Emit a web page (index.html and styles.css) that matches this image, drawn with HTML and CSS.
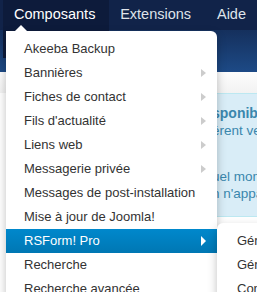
FILE: index.html
```html
<!DOCTYPE html>
<html lang="fr">
<head>
    <meta charset="UTF-8">
    <title>Composants</title>
    <link rel="stylesheet" href="styles.css">
</head>
<body>
    <div class="navbar">
        <ul class="nav">
            <li class="nav-item open">
                <a href="javascript:;">Composants <b class="caret"></b></a>
                <ul class="dropdown-menu">
                    <li><a href="javascript:;">Akeeba Backup</a></li>
                    <li class="has-sub"><a href="javascript:;">Bannières</a></li>
                    <li class="has-sub"><a href="javascript:;">Fiches de contact</a></li>
                    <li class="has-sub"><a href="javascript:;">Fils d'actualité</a></li>
                    <li class="has-sub"><a href="javascript:;">Liens web</a></li>
                    <li class="has-sub"><a href="javascript:;">Messagerie privée</a></li>
                    <li><a href="javascript:;">Messages de post-installation</a></li>
                    <li><a href="javascript:;">Mise à jour de Joomla!</a></li>
                    <li class="has-sub active">
                        <a href="javascript:;">RSForm! Pro</a>
                        <ul class="sub-menu">
                            <li><a href="javascript:;">Gérer les formulaires</a></li>
                            <li><a href="javascript:;">Gérer les soumissions</a></li>
                            <li><a href="javascript:;">Configuration</a></li>
                        </ul>
                    </li>
                    <li><a href="javascript:;">Recherche</a></li>
                    <li><a href="javascript:;">Recherche avancée</a></li>
                </ul>
            </li>
            <li class="nav-item"><a href="javascript:;">Extensions <b class="caret"></b></a></li>
            <li class="nav-item"><a href="javascript:;">Aide</a></li>
        </ul>
    </div>

    <div class="page">
        <div class="sidebar"></div>
        <div class="main">
            <div class="header"></div>
            <div class="subhead"></div>
            <div class="alert">
                <h4>sponible</h4>
                <p>érent version</p>
                <p class="gap">uel moment</p>
                <p>n n'apparaît</p>
            </div>
        </div>
    </div>
</body>
</html>
```

FILE: styles.css
```css
*{
    margin: 0;
    padding: 0;
}

body{
    width: 257px;
    height: 292px;
    overflow: hidden;
    background-color: #fff;
    font-family: "Liberation Sans", Arial, sans-serif;
    font-size: 13px;
    color: #333;
}

a{
    text-decoration: none;
    color: inherit;
}

ul{
    list-style: none;
}

/* barre du haut */
.navbar{
    height: 30px;
    background-color: #112349;
}

.nav{
    display: flex;
    padding-left: 3px;
    height: 30px;
}

.nav-item{
    position: relative;
}

.nav-item > a{
    display: block;
    padding: 0 11px;
    line-height: 29px;
    font-size: 14.5px;
    color: #dfe3ea;
}

.nav-item.open > a{
    background-color: #0d1b3b;
    color: #fff;
}

.caret{
    display: inline-block;
    margin-left: 3px;
    vertical-align: middle;
    border-top: 4px solid #fff;
    border-left: 4px solid transparent;
    border-right: 4px solid transparent;
    opacity: 0.9;
}

/* menu déroulant */
.dropdown-menu{
    position: absolute;
    top: 31px;
    left: 3px;
    width: 211px;
    padding: 6px 0 4px;
    background-color: #fff;
    border-radius: 0 6px 6px 6px;
    box-shadow: 0 4px 10px rgba(0, 0, 0, 0.25);
    z-index: 10;
}

.dropdown-menu:before{
    content: "";
    position: absolute;
    top: -6px;
    left: 9px;
    border-bottom: 6px solid #fff;
    border-left: 6px solid transparent;
    border-right: 6px solid transparent;
}

.dropdown-menu > li{
    position: relative;
}

.dropdown-menu > li > a{
    display: block;
    padding: 0 18px;
    line-height: 24px;
    white-space: nowrap;
    color: #333;
}

.has-sub > a:after{
    content: "";
    position: absolute;
    right: 11px;
    top: 8px;
    border-left: 5px solid #ccc;
    border-top: 4px solid transparent;
    border-bottom: 4px solid transparent;
}

.dropdown-menu > li.active > a{
    background-color: #0081c2;
    background-image: linear-gradient(#0088cc, #0077b3);
    color: #fff;
}

.dropdown-menu > li.active > a:after{
    border-left-color: #fff;
    top: 7px;
    border-top-width: 5px;
    border-bottom-width: 5px;
}

/* sous-menu RSForm */
.sub-menu{
    position: absolute;
    top: -6px;
    left: 211px;
    width: 180px;
    padding: 6px 0;
    background-color: #fff;
    border-radius: 6px 0 0 6px;
    box-shadow: 0 4px 10px rgba(0, 0, 0, 0.25);
}

.sub-menu a{
    display: block;
    padding: 0 20px;
    line-height: 24px;
    white-space: nowrap;
}

/* fond de la page */
.page{
    display: flex;
}

.sidebar{
    width: 6px;
    height: 262px;
    background-image: linear-gradient(#183767 0, #1b3f75 31px, #d5e2ec 31px, #d5e2ec 170px, #1d5f98 170px, #1d5f98 185px, #d5e2ec 185px);
}

.main{
    flex: 1;
}

.header{
    height: 42px;
    background-image: linear-gradient(#15305d, #1d4a86);
}

.subhead{
    height: 21px;
    background-image: linear-gradient(#fdfdfd, #f2f2f2);
}

.alert{
    margin-left: 190px;
    padding: 11px 0 13px 21px;
    height: 98px;
    background-color: #d9edf7;
    border: 1px solid #bce8f1;
    border-right: 0;
    color: #3a87ad;
    font-size: 13.5px;
    line-height: 17px;
    white-space: nowrap;
}

.alert h4{
    font-size: 14px;
    font-weight: bold;
}

.alert .gap{
    margin-top: 29px;
}
```
